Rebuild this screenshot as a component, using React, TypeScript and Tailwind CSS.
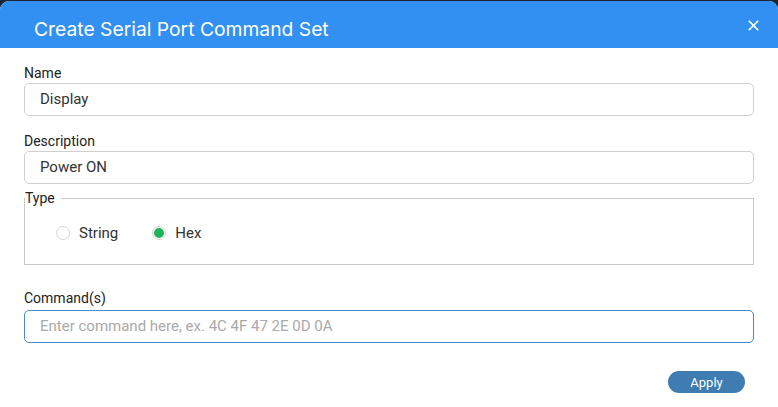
import { X } from "lucide-react";

function Field({ label, value, placeholder, focused }: { label: string; value?: string; placeholder?: string; focused?: boolean }) {
  return (
    <div className="flex flex-col">
      <span className="text-[14px] leading-5 text-[#222]">{label}</span>
      <div
        className={`h-[33px] rounded-[5px] border px-[15px] flex items-center text-[15px] ${
          focused ? "border-[#4a8ad0] mt-[2px]" : "border-[#cfcfcf]"
        }`}
      >
        {value ? <span className="text-[#333]">{value}</span> : <span className="text-[#aaaaaa]">{placeholder}</span>}
      </div>
    </div>
  );
}

function Radio({ label, checked }: { label: string; checked?: boolean }) {
  return (
    <label className="flex items-center gap-[9px]">
      <span className="w-[14px] h-[14px] rounded-full border border-[#d4d4d4] bg-white flex items-center justify-center">
        {checked && <span className="w-[10px] h-[10px] rounded-full bg-[#1fb35a]" />}
      </span>
      <span className="text-[15px] text-[#333]">{label}</span>
    </label>
  );
}

export default function App() {
  return (
    <div className="w-[778px] h-[407px] bg-[#1b2433] pt-px" style={{ fontFamily: "Roboto, 'Liberation Sans', sans-serif" }}>
      <div className="h-full bg-white rounded-t-[9px] overflow-hidden flex flex-col">
        <div className="h-[47px] bg-[#3190f2] flex items-center justify-between pl-[34px] pr-[16px] shrink-0">
          <span className="text-white text-[19.3px] pt-[9px]" style={{ fontFamily: "Inter, 'Noto Sans', sans-serif" }}>
            Create Serial Port Command Set
          </span>
          <X className="text-white mt-[1px]" size={17} strokeWidth={2.4} />
        </div>
        <div className="px-[24px] flex flex-col">
          <div className="mt-[15px]">
            <Field label="Name" value="Display" />
          </div>
          <div className="mt-[15px]">
            <Field label="Description" value="Power ON" />
          </div>
          <fieldset className="mt-[4px] h-[77px] border border-[#c8c8c8]">
            <legend className="text-[14px] leading-5 text-[#222] pr-[6px]">Type</legend>
            <div className="flex items-center gap-[34px] pl-[31px] pt-[14px]">
              <Radio label="String" />
              <Radio label="Hex" checked />
            </div>
          </fieldset>
          <div className="mt-[23px]">
            <Field label="Command(s)" placeholder="Enter command here, ex. 4C 4F 47 2E 0D 0A" focused />
          </div>
          <div className="flex justify-end mt-[28px] pr-[9px]">
            <button className="w-[77px] h-[22px] rounded-full bg-[#3e7cb2] text-white text-[13px] leading-none">Apply</button>
          </div>
        </div>
      </div>
    </div>
  );
}
